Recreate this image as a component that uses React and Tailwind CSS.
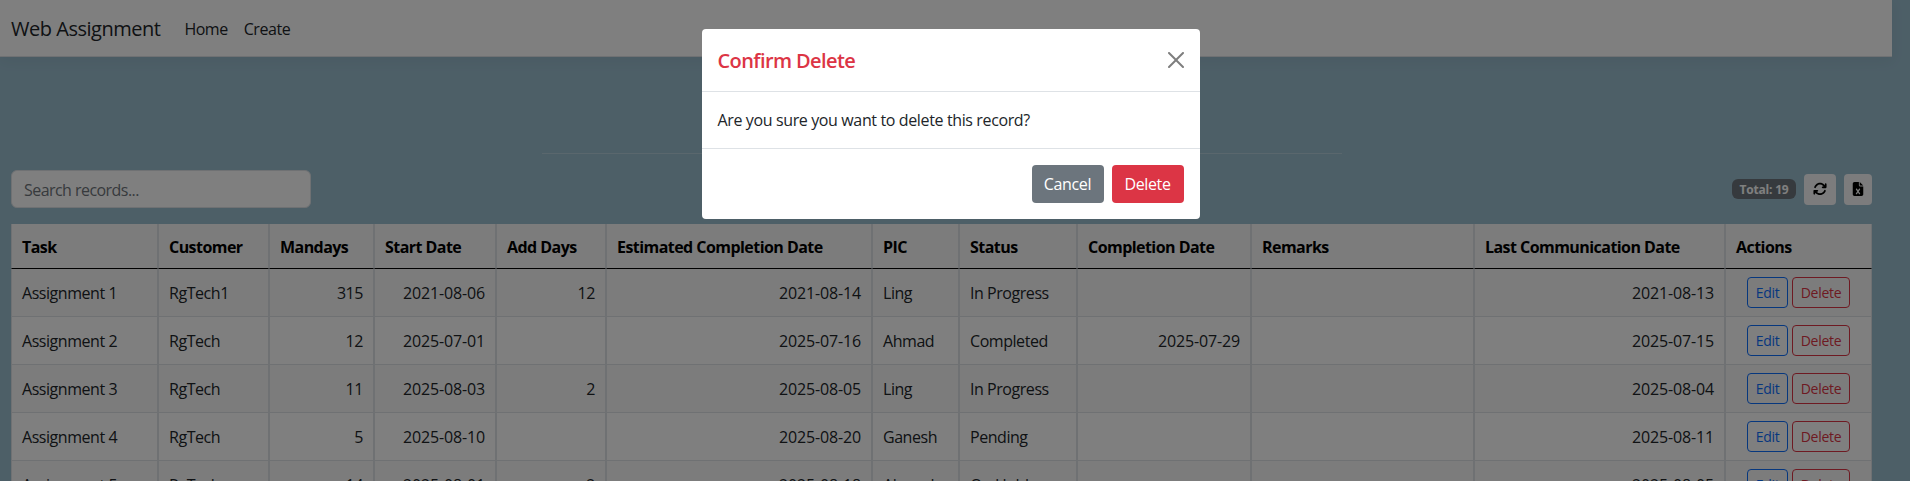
import { FaArrowsRotate, FaFileExcel } from "react-icons/fa6";

const columns = [
  { label: "Task", width: "w-[147px]" },
  { label: "Customer", width: "w-[111px]" },
  { label: "Mandays", width: "w-[105px]", right: true },
  { label: "Start Date", width: "w-[122px]", right: true, date: true },
  { label: "Add Days", width: "w-[110px]", right: true },
  { label: "Estimated Completion Date", width: "w-[266px]", right: true, date: true },
  { label: "PIC", width: "w-[87px]" },
  { label: "Status", width: "w-[118px]" },
  { label: "Completion Date", width: "w-[174px]", right: true, date: true },
  { label: "Remarks", width: "w-[223px]" },
  { label: "Last Communication Date", width: "w-[251px]", right: true, date: true },
  { label: "Actions", width: "w-[147px]" },
];

const rows = [
  ["Assignment 1", "RgTech1", "315", "2021-08-06", "12", "2021-08-14", "Ling", "In Progress", "", "", "2021-08-13"],
  ["Assignment 2", "RgTech", "12", "2025-07-01", "", "2025-07-16", "Ahmad", "Completed", "2025-07-29", "", "2025-07-15"],
  ["Assignment 3", "RgTech", "11", "2025-08-03", "2", "2025-08-05", "Ling", "In Progress", "", "", "2025-08-04"],
  ["Assignment 4", "RgTech", "5", "2025-08-10", "", "2025-08-20", "Ganesh", "Pending", "", "", "2025-08-11"],
  ["Assignment 5", "RgTech", "14", "2025-08-01", "2", "2025-08-18", "Ahmad", "On Hold", "", "", "2025-08-05"],
];

function Navbar() {
  return (
    <nav className="flex h-[57px] w-[1892px] items-center border-b border-[#dee2e6] bg-white pt-px pl-[11px] shadow-[0_4px_14px_rgba(0,0,0,0.05)]">
      <a className="text-[20px] tracking-[-0.48px] text-[#212529]">Web Assignment</a>
      <a className="ml-6 tracking-[-0.5px] text-[#212529]">Home</a>
      <a className="ml-4 tracking-[-0.4px] text-[#212529]">Create</a>
    </nav>
  );
}

function Toolbar() {
  return (
    <div className="flex h-[38px] items-center justify-between">
      <input
        className="h-[38px] w-[300px] rounded-md border border-[#dee2e6] bg-white px-3 pt-px tracking-[-0.55px] placeholder:text-[#6f757b]"
        placeholder="Search records..."
      />
      <div className="flex items-center gap-2">
        <span className="flex h-5 w-16 items-center justify-center rounded-md bg-[#6c757d] pt-px text-[12px] font-bold tracking-[-0.2px] text-white">
          Total: 19
        </span>
        <button className="flex h-[31px] w-8 items-center justify-center rounded bg-[#f8f9fa] text-black">
          <FaArrowsRotate size={14} />
        </button>
        <button className="flex h-[31px] w-7 items-center justify-center rounded bg-[#f8f9fa] text-black">
          <FaFileExcel size={14} />
        </button>
      </div>
    </div>
  );
}

function RecordTable() {
  return (
    <table className="mt-4 w-[1861px] table-fixed border-separate border-spacing-0">
      <thead>
        <tr className="h-[45px]">
          {columns.map((c) => (
            <th
              key={c.label}
              className={`${c.width} whitespace-nowrap border-x border-b border-x-[#dee2e6] border-b-black bg-[#f8f8f8] px-[10px] pt-0.5 pb-0 text-left font-bold tracking-[-0.55px] text-black`}
            >
              {c.label}
            </th>
          ))}
        </tr>
      </thead>
      <tbody>
        {rows.map((row, r) => (
          <tr key={row[0]} className={`h-12 ${r % 2 === 0 ? "bg-[#f9f9f9]" : "bg-white"}`}>
            {row.map((cell, i) => (
              <td
                key={i}
                className={`whitespace-nowrap border-x border-b border-[#dee2e6] px-[10px] py-0 text-[#212529] ${columns[i].right ? "text-right" : ""} ${columns[i].date ? "tracking-[-0.15px]" : "tracking-[-0.45px]"}`}
              >
                {cell}
              </td>
            ))}
            <td className="border-x border-b border-[#dee2e6] p-0">
              <div className="flex justify-center gap-1 text-sm tracking-[-0.3px]">
                <button className="h-[31px] w-[41px] rounded border border-[#0d6efd] text-[#0d6efd]">Edit</button>
                <button className="h-[31px] w-[58px] rounded border border-[#dc3545] text-[#dc3545]">Delete</button>
              </div>
            </td>
          </tr>
        ))}
      </tbody>
    </table>
  );
}

function ConfirmDialog() {
  return (
    <div className="absolute inset-0 flex items-start justify-center bg-black/50 pt-[29px] pr-[9px]">
      <div role="dialog" className="flex h-[190px] w-[498px] flex-col rounded-[4px] bg-white text-[#212529]">
        <div className="flex h-[63px] items-center justify-between border-b border-[#dee2e6] px-4">
          <h5 className="pt-0.5 text-xl font-semibold tracking-[-0.6px] text-[#dc3545]">Confirm Delete</h5>
          <button aria-label="Close" className="opacity-50">
            <svg viewBox="0 0 16 16" className="size-4" fill="#000">
              <path d="M.293.293a1 1 0 0 1 1.414 0L8 6.586 14.293.293a1 1 0 1 1 1.414 1.414L9.414 8l6.293 6.293a1 1 0 0 1-1.414 1.414L8 9.414l-6.293 6.293a1 1 0 0 1-1.414-1.414L6.586 8 .293 1.707a1 1 0 0 1 0-1.414z" />
            </svg>
          </button>
        </div>
        <div className="flex h-[57px] items-center border-b border-[#dee2e6] px-4 tracking-[-0.37px]">
          Are you sure you want to delete this record?
        </div>
        <div className="flex flex-1 items-center justify-end gap-2 px-4 tracking-[-0.35px] text-white">
          <button className="h-[38px] w-[72px] rounded bg-[#6c757d]">Cancel</button>
          <button className="h-[38px] w-[72px] rounded bg-[#dc3545]">Delete</button>
        </div>
      </div>
    </div>
  );
}

export default function App() {
  return (
    <div className="relative h-screen overflow-hidden bg-[#9bbecf] font-['Open_Sans','Noto_Sans',sans-serif] text-base leading-6">
      <Navbar />
      <main className="w-[1872px] pl-[11px]">
        <div className="flex h-[113px] flex-col items-center pt-24">
          <hr className="w-[800px] border-white/25" />
        </div>
        <Toolbar />
        <RecordTable />
      </main>
      <ConfirmDialog />
    </div>
  );
}
